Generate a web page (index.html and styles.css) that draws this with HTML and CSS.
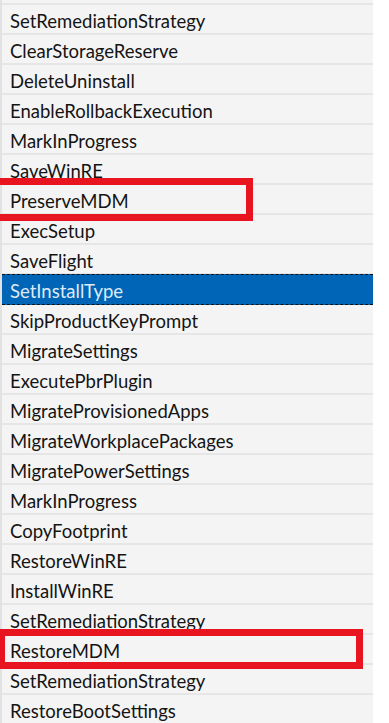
FILE: index.html
```html
<!DOCTYPE html>
<html lang="en">
<head>
    <meta charset="UTF-8">
    <meta name="viewport" content="width=device-width, initial-scale=1.0">
    <title>Task sequence</title>
    <link rel="stylesheet" href="styles.css">
</head>
<body>
    <div class="panel">
        <ul class="step-list">
            <li class="step"></li>
            <li class="step">SetRemediationStrategy</li>
            <li class="step">ClearStorageReserve</li>
            <li class="step">DeleteUninstall</li>
            <li class="step">EnableRollbackExecution</li>
            <li class="step">MarkInProgress</li>
            <li class="step">SaveWinRE</li>
            <li class="step">PreserveMDM</li>
            <li class="step">ExecSetup</li>
            <li class="step">SaveFlight</li>
            <li class="step selected">SetInstallType</li>
            <li class="step">SkipProductKeyPrompt</li>
            <li class="step">MigrateSettings</li>
            <li class="step">ExecutePbrPlugin</li>
            <li class="step">MigrateProvisionedApps</li>
            <li class="step">MigrateWorkplacePackages</li>
            <li class="step">MigratePowerSettings</li>
            <li class="step">MarkInProgress</li>
            <li class="step">CopyFootprint</li>
            <li class="step">RestoreWinRE</li>
            <li class="step">InstallWinRE</li>
            <li class="step">SetRemediationStrategy</li>
            <li class="step">RestoreMDM</li>
            <li class="step">SetRemediationStrategy</li>
            <li class="step">RestoreBootSettings</li>
        </ul>

        <!-- highlight frames drawn over the list -->
        <div class="mark mark-preserve"></div>
        <div class="mark mark-restore"></div>
    </div>
</body>
</html>
```

FILE: styles.css
```css
* {
    margin: 0;
    padding: 0;
    box-sizing: border-box;
}

html, body {
    height: 100%;
}

body {
    background: #fff;
    font-family: 'Lato', 'Open Sans', sans-serif;
    overflow: hidden;
}

.panel {
    position: relative;
    display: flow-root;
    height: 100%;
}

.step-list {
    list-style: none;
    width: 373px;
    margin-top: -25px;
    background: #f4f4f4;
    border-left: 2px solid #e2e2e2;
}

.step {
    height: 30px;
    padding: 4px 0 0 8px;
    font-size: 18.5px;
    line-height: 25px;
    color: #141414;
    border-bottom: 2px solid #e6e6e6;
    white-space: nowrap;
}

.step.selected {
    background: #0065b6;
    color: #dfeaf7;
    border-top: 1px dashed #111;
    border-bottom: 1px dashed #111;
    margin-top: -1px;
    height: 31px;
}

.mark {
    position: absolute;
    border: 7px solid #e8141f;
}

.mark-preserve {
    left: -10px;
    top: 178px;
    width: 263px;
    height: 43px;
}

.mark-restore {
    left: -2px;
    top: 629px;
    width: 365px;
    height: 40px;
}
```
